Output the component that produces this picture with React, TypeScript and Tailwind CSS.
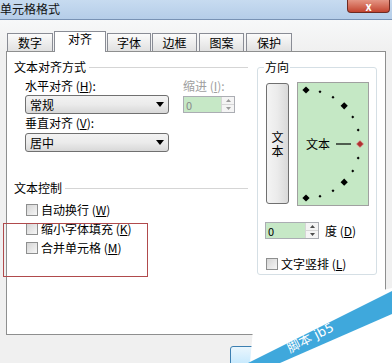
import React from "react";

const FONT = "font-['SimSun','Noto_Sans_CJK_SC',sans-serif]";

function Tab({ label, selected, cls }: { label: string; selected?: boolean; cls: string }) {
  if (selected) {
    return (
      <div className={`relative z-10 -mb-px flex h-[21px] items-start justify-center border border-b-0 border-[#898c95] bg-white leading-[14px] ${cls}`}>
        {label}
      </div>
    );
  }
  return (
    <div className={`flex h-[18px] items-center justify-center border border-b-0 border-[#898c95] bg-gradient-to-b from-[#fbfbfb] to-[#e1e1e1] leading-[14px] ${cls}`}>
      {label}
    </div>
  );
}

function Select({ value }: { value: string }) {
  return (
    <div className="flex h-[19px] w-[144px] items-center justify-between rounded-[3px] border border-[#707070] bg-gradient-to-b from-[#f3f3f3] via-[#ebebeb] to-[#d8d8d8] pl-[4px] pr-[4px]">
      <span className="leading-[14px]">{value}</span>
      <svg width="8" height="5" viewBox="0 0 8 5">
        <path d="M0 0 L8 0 L4 5 Z" fill="#000" />
      </svg>
    </div>
  );
}

function Spinner({ w, disabled }: { w: string; disabled?: boolean }) {
  return (
    <div className={`flex h-[17px] border border-[#abadb3] ${w}`}>
      <div className={`flex flex-1 items-center bg-[#c6e8c6] pl-[2px] text-[11px] leading-[12px] ${disabled ? "text-[#8a8a8a]" : "text-black"}`}>0</div>
      <div className="flex w-[13px] flex-col border-l border-[#d6d6d6] bg-[#f4f4f4]">
        <div className="flex flex-1 items-center justify-center border-b border-[#d6d6d6]">
          <svg width="5" height="3" viewBox="0 0 5 3"><path d="M0 3 L5 3 L2.5 0 Z" fill={disabled ? "#9a9a9a" : "#4d4d4d"} /></svg>
        </div>
        <div className="flex flex-1 items-center justify-center">
          <svg width="5" height="3" viewBox="0 0 5 3"><path d="M0 0 L5 0 L2.5 3 Z" fill={disabled ? "#9a9a9a" : "#4d4d4d"} /></svg>
        </div>
      </div>
    </div>
  );
}

function Check({ label, k }: { label: string; k: string }) {
  return (
    <div className="flex h-[19px] items-start">
      <div className="mt-0 h-[12px] w-[12px] border border-[#8e8f8f] bg-gradient-to-br from-[#d5d5d5] to-[#f6f6f6]" />
      <span className="ml-[3px] leading-[12px]">
        {label} (<u>{k}</u>)
      </span>
    </div>
  );
}

function Dial() {
  const pts: { x: number; y: number; big?: boolean; red?: boolean }[] = [];
  for (let i = 0; i <= 12; i++) {
    const deg = 90 - i * 15;
    const r = (deg * Math.PI) / 180;
    const x = 8 + 54 * Math.cos(r);
    const y = 61 - 54 * Math.sin(r);
    pts.push({ x, y, big: deg % 45 === 0 && deg !== 0, red: deg === 0 });
  }
  return (
    <svg width="70" height="122" viewBox="0 0 70 122" className="block">
      {pts.map((p, i) => {
        const s = p.big || p.red ? 3.6 : 1.5;
        return (
          <path
            key={i}
            d={`M${p.x} ${p.y - s} L${p.x + s} ${p.y} L${p.x} ${p.y + s} L${p.x - s} ${p.y} Z`}
            fill={p.red ? "#b03030" : "#000"}
            stroke={p.red ? "#e8a0a0" : "none"}
            strokeWidth={p.red ? 0.6 : 0}
          />
        );
      })}
      <text x="8" y="66" fontSize="12" fontFamily="SimSun, 'Noto Sans CJK SC', sans-serif" fill="#000">文本</text>
      <line x1="38" y1="61" x2="53" y2="61" stroke="#000" strokeWidth="1.2" />
    </svg>
  );
}

export default function App() {
  return (
    <div className={`relative h-[363px] w-[392px] overflow-hidden bg-[#f0f0f0] text-[12px] text-black ${FONT}`}>
      {/* title bar */}
      <div className="flex h-[20px] items-start justify-between border-b border-[#7892b4] bg-gradient-to-b from-[#c7dbf0] to-[#b5cde8]">
        <span className="pt-[2px] text-[12px] leading-[14px] text-[#111]">单元格格式</span>
        <div className="mr-[2px] flex h-[13px] w-[43px] items-center justify-center rounded-b-[4px] border border-t-0 border-[#6e2a22] bg-gradient-to-b from-[#e49584] to-[#c2432f] text-[11px] font-bold leading-[10px] text-white">
          x
        </div>
      </div>

      {/* tabs */}
      <div className="flex h-[31px] items-end pl-[7px] bg-gradient-to-b from-[#f7f8f9] to-[#f0f0f0]">
        <Tab label="数字" cls="w-[46px]" />
        <Tab label="对齐" selected cls="ml-[1px] w-[52px]" />
        <Tab label="字体" cls="ml-[1px] w-[44px]" />
        <Tab label="边框" cls="ml-[1px] w-[45px]" />
        <Tab label="图案" cls="ml-[2px] w-[45px]" />
        <Tab label="保护" cls="ml-[2px] w-[46px]" />
      </div>

      {/* panel */}
      <div className="mx-[6px] flex h-[284px] w-[380px] border border-[#8e8f8f] bg-white pl-[7px] pt-[9px]">
        {/* left column */}
        <div className="flex w-[234px] flex-col">
          <div className="flex h-[12px] items-center">
            <span className="leading-[12px]">文本对齐方式</span>
            <div className="ml-[3px] h-px flex-1 bg-[#d5d5d5]" />
          </div>
          <div className="mt-[7px] flex">
            <div className="ml-[11px] flex w-[144px] flex-col">
              <span className="leading-[12px]">水平对齐 (<u>H</u>):</span>
              <div className="mt-[3px]"><Select value="常规" /></div>
              <span className="mt-[3px] leading-[12px]">垂直对齐 (<u>V</u>):</span>
              <div className="mt-[4px]"><Select value="居中" /></div>
            </div>
            <div className="ml-[14px] flex w-[52px] flex-col">
              <span className="leading-[12px] text-[#a0a0a0]">缩进 (<u>I</u>):</span>
              <div className="mt-[4px]"><Spinner w="w-[52px]" disabled /></div>
            </div>
          </div>
          <div className="mt-[30px] flex h-[12px] items-center">
            <span className="leading-[12px]">文本控制</span>
            <div className="ml-[3px] h-px flex-1 bg-[#d5d5d5]" />
          </div>
          <div className="ml-[12px] mt-[10px] flex flex-col">
            <Check label="自动换行" k="W" />
            <Check label="缩小字体填充" k="K" />
            <Check label="合并单元格" k="M" />
          </div>
        </div>

        {/* right group */}
        <div className="relative ml-[9px] mt-[6px] flex h-[208px] w-[120px] flex-col rounded-[3px] border border-[#d5dfe5]">
          <span className="absolute -top-[7px] left-[6px] bg-white px-[1px] leading-[12px]">方向</span>
          <div className="flex items-start">
            <div className="ml-[8px] mt-[15px] flex h-[121px] w-[23px] flex-col items-center justify-center gap-[1px] rounded-[3px] border border-[#707070] bg-gradient-to-r from-[#f4f4f4] via-[#ebebeb] to-[#d9d9d9]">
              <span className="leading-[13px]">文</span>
              <span className="leading-[13px]">本</span>
            </div>
            <div className="ml-[8px] mt-[14px] h-[124px] w-[72px] border border-[#a0a0a0] bg-[#c5e8c5]">
              <Dial />
            </div>
          </div>
          <div className="ml-[7px] mt-[16px] flex items-center">
            <Spinner w="w-[54px]" />
            <span className="ml-[6px] leading-[12px]">度 (<u>D</u>)</span>
          </div>
          <div className="ml-[8px] mt-[19px] flex items-start">
            <div className="h-[12px] w-[12px] border border-[#8e8f8f] bg-gradient-to-br from-[#d5d5d5] to-[#f6f6f6]" />
            <span className="ml-[3px] leading-[12px]">文字竖排 (<u>L</u>)</span>
          </div>
        </div>
      </div>

      {/* bottom bar */}
      <div className="flex">
        <div className="ml-[230px] mt-[11px] flex h-[23px] w-[75px] items-center justify-center rounded-[3px] border border-[#3c7fb1] bg-gradient-to-b from-[#eaf6fd] to-[#bee6fd] leading-[12px]">
          确定
        </div>
      </div>

      {/* annotation */}
      <div className="pointer-events-none absolute left-[3px] top-[223px] h-[54px] w-[145px] border border-[#b04a4c]" />

      {/* watermark */}
      <svg className="pointer-events-none absolute left-0 top-0" width="392" height="363" viewBox="0 0 392 363">
        <defs>
          <clipPath id="band">
            <polygon points="248,363 392,291 392,314 280,363" />
          </clipPath>
        </defs>
        <polygon points="254,318 392,288 392,363 250,363" fill="#ffffff" />
        <polygon points="248,363 392,291 392,314 280,363" fill="#3fa8dc" />
        <g clipPath="url(#band)">
          <text
            x="290"
            y="353"
            fontSize="13"
            fontFamily="'DejaVu Sans', 'Noto Sans CJK SC', sans-serif"
            fill="#ffffff"
            transform="rotate(-27 290 353)"
          >
            脚本  jb5
          </text>
        </g>
      </svg>
    </div>
  );
}
